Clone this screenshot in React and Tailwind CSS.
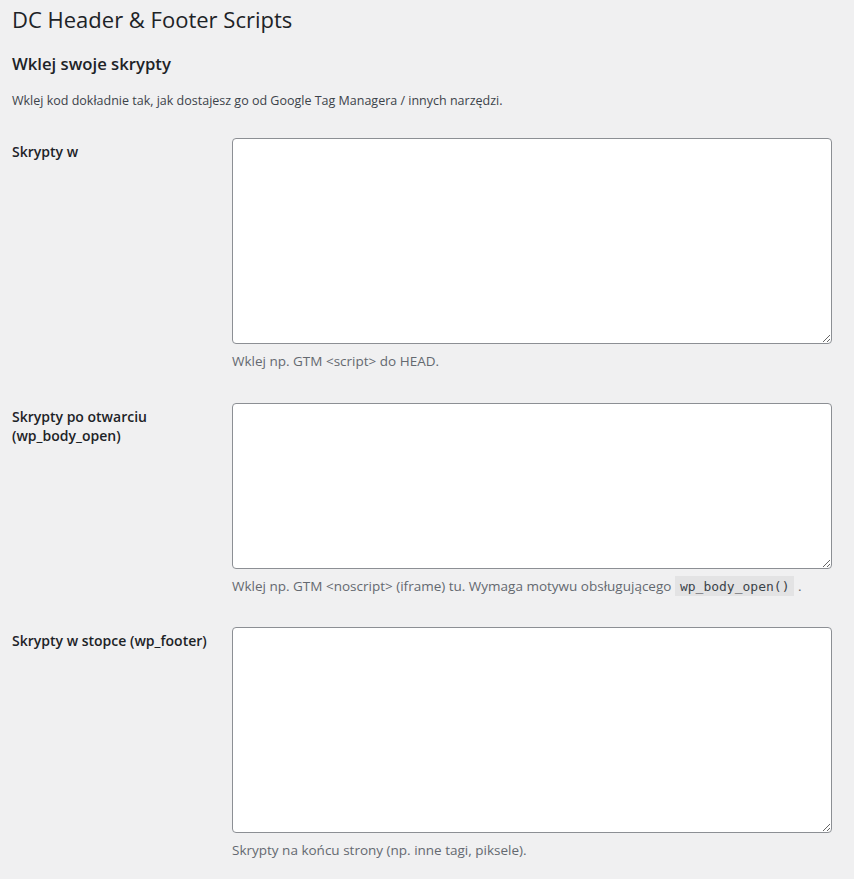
import React from 'react';

const fields = [
  {
    id: 'head',
    labelText: ['Skrypty w'],
    height: 'h-[206px]',
    gap: 'pb-[33px]',
    help: 'Wklej np. GTM <script> do HEAD.',
  },
  {
    id: 'body',
    labelText: ['Skrypty po otwarciu', '(wp_body_open)'],
    height: 'h-[166px]',
    gap: 'pb-[31px]',
    help: 'Wklej np. GTM <noscript> (iframe) tu. Wymaga motywu obsługującego',
    code: 'wp_body_open()',
  },
  {
    id: 'footer',
    labelText: ['Skrypty w stopce (wp_footer)'],
    height: 'h-[206px]',
    gap: 'pb-[33px]',
    help: 'Skrypty na końcu strony (np. inne tagi, piksele).',
  },
];

function FieldRow({ field }) {
  return (
    <div className={`grid grid-cols-[220px_600px] ${field.gap}`}>
      <div className="pt-[4px] text-[14px] font-semibold leading-[19px] text-[#1d2327]">
        {field.labelText.map((line) => (
          <div key={line}>{line}</div>
        ))}
      </div>
      <div>
        <textarea
          className={`block w-[600px] ${field.height} rounded-[4px] border border-[#8c8f94] bg-white px-2 py-1 text-[14px] text-[#2c3338] outline-none`}
          style={{ resize: 'vertical' }}
        />
        <p className="mt-[8px] text-[13.5px] leading-[18px] text-[#646970]">
          {field.help}
          {field.code && (
            <>
              {' '}
              <code className="bg-[#e3e3e4] px-[5px] pb-[2px] pt-[3px] font-['DejaVu_Sans_Mono',monospace] text-[13px] text-[#3c434a]">
                {field.code}
              </code>{' '}
              .
            </>
          )}
        </p>
      </div>
    </div>
  );
}

export default function App() {
  return (
    <div className="min-h-[879px] bg-[#f0f0f1] pl-[12px] font-['Open_Sans','Noto_Sans',sans-serif]">
      <h1 className="pt-[4px] text-[22px] font-normal leading-[30px] text-[#1d2327]">
        DC Header &amp; Footer Scripts
      </h1>
      <h2 className="mt-[19px] text-[16.7px] font-semibold leading-[22px] text-[#1d2327]">
        Wklej swoje skrypty
      </h2>
      <p className="mt-[17px] text-[12.5px] leading-[18px] text-[#3c434a]">
        Wklej kod dokładnie tak, jak dostajesz go od Google Tag Managera / innych narzędzi.
      </p>
      <div className="mt-[28px]">
        {fields.map((f) => (
          <FieldRow key={f.id} field={f} />
        ))}
      </div>
    </div>
  );
}
